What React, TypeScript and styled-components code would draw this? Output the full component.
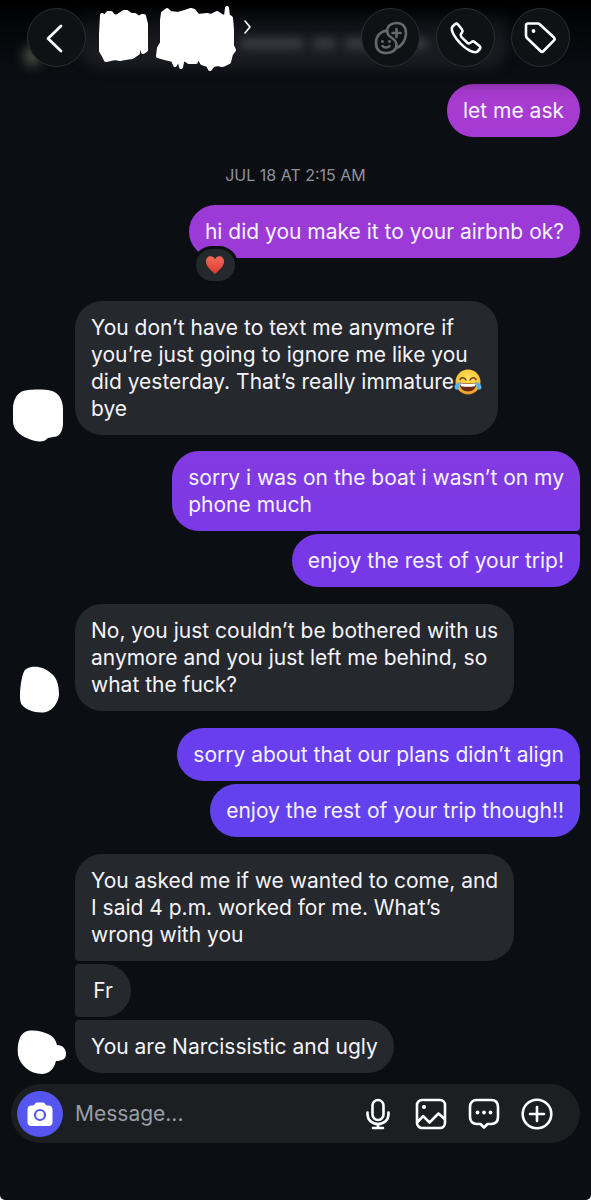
import React from 'react';
import styled, { createGlobalStyle } from 'styled-components';

const GlobalStyle = createGlobalStyle`
  *, *::before, *::after { box-sizing: border-box; }
  body {
    margin: 0;
    background: #ffffff;
    font-family: Inter, 'Liberation Sans', sans-serif;
  }
  button { font: inherit; color: inherit; cursor: pointer; }
`;

const Screen = styled.div`
  display: flex;
  flex-direction: column;
  min-height: 100vh;
  background: #0b0f13;
  border-radius: 0 0 5px 5px;
`;

const Header = styled.header`
  position: sticky;
  top: 0;
  z-index: 2;
  display: flex;
  align-items: flex-start;
  height: 84px;
  padding: 8px 21px 0 27px;
  overflow: hidden;
  background: linear-gradient(#000000, #04060a 30px, #0a0d12 70px, #0b0f13);
`;

const Backdrop = styled.div`
  position: absolute;
  inset: 0 82px 16px 78px;
  border-radius: 24px;
  background: linear-gradient(rgba(34, 35, 41, 0) 8px, rgba(34, 35, 41, 0.6) 32px, rgba(34, 35, 41, 0.75));
  filter: blur(6px);
`;

const Smear = styled.span<{ $left: number; $width: number }>`
  position: absolute;
  top: 38px;
  left: ${(p) => p.$left}px;
  width: ${(p) => p.$width}px;
  height: 11px;
  border-radius: 4px;
  background: rgba(150, 150, 158, 0.28);
  filter: blur(5px);
`;

const Glow = styled.span`
  position: absolute;
  top: 46px;
  left: 24px;
  width: 16px;
  height: 20px;
  border-radius: 8px;
  background: #4a5248;
  filter: blur(6px);
`;

const RoundButton = styled.button<{ $dim?: boolean }>`
  position: relative;
  display: grid;
  place-items: center;
  flex: none;
  width: 59px;
  height: 59px;
  padding: 0;
  border: 1px solid #2c2f32;
  border-radius: 50%;
  background: #0f1214;
  color: ${(p) => (p.$dim ? '#66686a' : '#ffffff')};
`;

const Profile = styled.button`
  position: relative;
  display: flex;
  flex: 1;
  padding: 0;
  margin-left: 10px;
  border: 0;
  background: none;
  svg { overflow: visible; }
`;

const Actions = styled.div`
  display: flex;
  gap: 16px;
`;

const Thread = styled.main`
  display: flex;
  flex-direction: column;
  padding: 0 11px 11px;
`;

const DateLabel = styled.time`
  align-self: center;
  margin: 28px 0 20px;
  font-size: 16px;
  line-height: 20px;
  color: #8f929c;
`;

const Group = styled.section<{ $gap: number; $sent?: boolean }>`
  display: flex;
  align-items: flex-end;
  justify-content: ${(p) => (p.$sent ? 'flex-end' : 'flex-start')};
  margin-bottom: ${(p) => p.$gap}px;
`;

const AvatarSlot = styled.div`
  flex: none;
  width: 64px;
  height: 54px;
  margin-bottom: -8px;
`;

const Stack = styled.div<{ $sent?: boolean }>`
  display: flex;
  flex-direction: column;
  align-items: ${(p) => (p.$sent ? 'flex-end' : 'flex-start')};
  gap: 3px;
`;

const Bubble = styled.div<{ $color: string; $corners?: string; $short?: boolean }>`
  position: relative;
  min-width: 56px;
  padding: 13px 16px;
  border-radius: ${(p) => p.$corners || '27px'};
  background: ${(p) => p.$color};
  color: #f5f3fa;
  font-size: 21px;
  line-height: 27px;
  text-align: ${(p) => (p.$short ? 'center' : 'left')};
  white-space: pre-line;
`;

const Reaction = styled.span`
  position: absolute;
  left: 4px;
  bottom: -26px;
  display: grid;
  place-items: center;
  width: 45px;
  height: 38px;
  border: 3px solid #0b0f13;
  border-radius: 19px;
  background: #25282c;
`;

const Emoji = styled.svg`
  vertical-align: -6px;
`;

const Composer = styled.form`
  display: flex;
  align-items: center;
  height: 59px;
  margin: 0 11px;
  padding: 0 27px 0 6px;
  border-radius: 30px;
  background: #1c1f21;
`;

const CameraButton = styled.button`
  display: grid;
  place-items: center;
  flex: none;
  width: 46px;
  height: 46px;
  padding: 0;
  border: 0;
  border-radius: 50%;
  background: #5555f0;
`;

const MessageInput = styled.input`
  flex: 1;
  min-width: 0;
  margin-left: 12px;
  padding: 0;
  border: 0;
  outline: 0;
  background: none;
  color: #f5f3fa;
  font-family: inherit;
  font-size: 21px;
  line-height: 27px;
  &::placeholder { color: #9a9da8; opacity: 1; }
`;

const Tools = styled.div`
  display: flex;
  gap: 21px;
`;

const ToolButton = styled.button`
  display: grid;
  place-items: center;
  width: 32px;
  height: 32px;
  padding: 0;
  border: 0;
  background: none;
  color: #ffffff;
`;

const line = {
  fill: 'none',
  stroke: 'currentColor',
  strokeWidth: 2.6,
  strokeLinecap: 'round' as const,
  strokeLinejoin: 'round' as const,
};

const GREY = '#25282c';

const Heart = () => (
  <svg width="20" height="20" viewBox="0 0 20 20" role="img" aria-label="heart">
    <defs>
      <linearGradient id="heart" x1="0" y1="0" x2="0" y2="1">
        <stop offset="0" stopColor="#f5695a" />
        <stop offset="1" stopColor="#d93a2a" />
      </linearGradient>
    </defs>
    <path fill="url(#heart)" d="M10 19C6 15.5 1 11.500 1 6.500C1 3.300 3 1.300 5.600 1.300C7.600 1.300 9.200 2.500 10 4.300C10.800 2.500 12.400 1.300 14.400 1.300C17 1.300 19 3.300 19 6.500C19 11.500 14 15.500 10 19Z" />
  </svg>
);

const Joy = () => (
  <Emoji width="28" height="26" viewBox="0 0 28 26" role="img" aria-label="tears of joy">
    <defs>
      <radialGradient id="joy" cx="0.5" cy="0.35" r="0.65">
        <stop offset="0" stopColor="#ffe45c" />
        <stop offset="0.7" stopColor="#fbc53a" />
        <stop offset="1" stopColor="#e9952a" />
      </radialGradient>
    </defs>
    <circle cx="14" cy="13" r="12.500" fill="url(#joy)" />
    <path d="M6 10.500C7.500 8 10.500 8 12 11M16 11C17.500 8 20.500 8 22 10.500" fill="none" stroke="#6b3c12" strokeWidth="1.500" strokeLinecap="round" />
    <path d="M5.500 13.500C10 14.800 18 14.800 22.500 13.500C22.500 19.500 19 22.500 14 22.500C9 22.500 5.500 19.500 5.500 13.500Z" fill="#6b2c12" />
    <path d="M6.200 14.200C10 15.300 18 15.300 21.800 14.200C21.700 16 21.300 16.800 20.800 17.200C16 18 12 18 7.200 17.200C6.700 16.800 6.300 16 6.200 14.200Z" fill="#ffffff" />
    <path d="M5.500 13C3 14 0.500 15.500 0.500 18C0.500 20 2 21 3.500 20.500C5.800 19.700 5.800 16 5.500 13ZM22.500 13C25 14 27.500 15.500 27.500 18C27.500 20 26 21 24.500 20.500C22.200 19.700 22.200 16 22.500 13Z" fill="#52b5ee" />
  </Emoji>
);

const blobs = {
  square: 'M10 3C16 0 33 0 41 2C48 4 52 11 52 20V36C51 44 48 48 42 48L37 49C33 54 25 53 18 50C8 46 2 40 2 32V20C2 12 5 6 10 3Z',
  oval: 'M17 3C24 0 34 2 41 9C47 14 48 23 48 30C47 38 42 45 35 47C26 49 15 45 11 40C7 35 10 15 12 9C13 6 14 4 17 3Z',
  nub: 'M14 5C20 2 32 4 39 8C43 10 45 14 46 18C52 18 55 22 55 27C55 32 51 34 45 34C43 42 38 47 31 47C19 47 9 38 7 28C6 18 8 8 14 5Z',
};

const Avatar = ({ shape }: { shape: keyof typeof blobs }) => (
  <AvatarSlot>
    <svg width="64" height="54" viewBox="0 0 64 54" aria-hidden="true">
      <path d={blobs[shape]} fill="#ffffff" />
    </svg>
  </AvatarSlot>
);

export default function App() {
  return (
    <>
      <GlobalStyle />
      <Screen>
        <Header>
          <Backdrop />
          <Smear $left={240} $width={64} />
          <Smear $left={312} $width={24} />
          <Smear $left={344} $width={84} />
          <Glow />
          <RoundButton aria-label="Back">
            <svg width="32" height="32" viewBox="0 0 32 32" {...line} strokeWidth={2.8}>
              <path d="M20 4L7 16.500L20 29" />
            </svg>
          </RoundButton>
          <Profile aria-label="Open profile">
            <svg width="160" height="66" viewBox="96 8 160 66">
              <g fill="#fff" stroke="#fff" strokeWidth="4" strokeLinejoin="round" strokeLinecap="round">
                <path d="M102 15L105 17L108 13L111 13L114 17L118 16L124 12L127 12L131 15L135 15L139 18L142 16L144 16L146 24V50L143 52L142 44L140 40L138 53L132 57L125 58L120 59L115 58L106 60L104 56L101 51L101 34Z" />
                <path d="M163 13L167 10L170 13L178 14L185 12L191 10L194 11L198 16L207 15L211 16L217 13L223 17L226 16L227 8L228 16L231 18L232 30L232 46L234 50L231 54L229 62L225 64L222 65L218 64L213 65L210 69L208 65L202 63L198 55L196 62L189 62L183 58L181 67L179 58L175 65L173 60L165 58L158 56L159 48L162 43L162 20Z" />
              </g>
              <path d="M245 21L250 27L245 33" {...line} stroke="#fff" strokeWidth={1.600} />
            </svg>
          </Profile>
          <Actions>
            <RoundButton $dim aria-label="Add sticker reaction">
              <svg width="34" height="34" viewBox="0 0 34 34" {...line} strokeWidth={2.600}>
                <path d="M13 11C13 5 17 2 22.500 2C28.500 2 32 6 32 12C32 19 28 25.500 22 27" />
                <path d="M13 9.500C13 18 22.500 16 22.500 24C22.500 29 18 32 12.500 32C6 32 2 28.500 2 22C2 15 6.500 10.500 13 9.500Z" />
                <path d="M22.500 8V16M18.500 12H26.500M8.500 25C10 27 14 27 15.500 25" />
                <path d="M8.500 20.500V20.700M15.500 20.500V20.700" strokeWidth={2.800} />
              </svg>
            </RoundButton>
            <RoundButton aria-label="Call">
              <svg width="34" height="34" viewBox="0 0 34 34" {...line}>
                <path d="M3.500 5.500L6 3.200C7 2.400 8.200 2.500 9 3.500L13 8.500C13.800 9.500 13.700 10.500 13 11.500L12 13C11.400 14 11.600 15 12.300 15.800L18.200 21.700C19 22.400 20 22.600 21 22L22.500 21C23.500 20.300 24.500 20.200 25.500 21L30.500 25C31.500 25.800 31.600 27 30.800 28L28.500 30.500C25 33 16.500 28 11.500 22.500C6 17 1 9 3.500 5.500Z" />
              </svg>
            </RoundButton>
            <RoundButton aria-label="Label">
              <svg width="34" height="34" viewBox="0 0 34 34" {...line}>
                <path d="M4 2.500H13.500C14.500 2.500 15.300 2.800 16 3.500L30 16.500C30.900 17.500 30.900 18.300 30 19.300L19.500 30C18.500 31 17.500 31 16.500 30L3 17C2.300 16.300 2 15.500 2 14.500V4.500C2 3.200 2.700 2.500 4 2.500Z" />
                <circle cx="9.500" cy="10" r="1.900" fill="currentColor" stroke="none" />
              </svg>
            </RoundButton>
          </Actions>
        </Header>

        <Thread>
          <Group $sent $gap={0}>
            <Bubble $color="linear-gradient(#8a30aa, #a037c6 6px, #a83bd0 16px, #a53bd3)">let me ask</Bubble>
          </Group>
          <DateLabel>JUL 18 AT 2:15 AM</DateLabel>
          <Group $sent $gap={43}>
            <Bubble $color="#9b3ad6">
              hi did you make it to your airbnb ok?
              <Reaction><Heart /></Reaction>
            </Bubble>
          </Group>
          <Group $gap={16}>
            <Avatar shape="square" />
            <Bubble $color={GREY}>
              {'You don’t have to text me anymore if\nyou’re just going to ignore me like you\ndid yesterday. That’s really immature'}
              <Joy />
              {'\nbye'}
            </Bubble>
          </Group>
          <Group $sent $gap={17}>
            <Stack $sent>
              <Bubble $color="linear-gradient(#833ae2, #7b39e6)" $corners="27px 27px 4px 27px">
                {'sorry i was on the boat i wasn’t on my\nphone much'}
              </Bubble>
              <Bubble $color="#7739e8" $corners="27px 4px 27px 27px">enjoy the rest of your trip!</Bubble>
            </Stack>
          </Group>
          <Group $gap={17}>
            <Avatar shape="oval" />
            <Bubble $color={GREY}>
              {'No, you just couldn’t be bothered with us\nanymore and you just left me behind, so\nwhat the fuck?'}
            </Bubble>
          </Group>
          <Group $sent $gap={17}>
            <Stack $sent>
              <Bubble $color="#683eee" $corners="27px 27px 4px 27px">sorry about that our plans didn’t align</Bubble>
              <Bubble $color="#6441ef" $corners="27px 4px 27px 27px">enjoy the rest of your trip though!!</Bubble>
            </Stack>
          </Group>
          <Group $gap={0}>
            <Avatar shape="nub" />
            <Stack>
              <Bubble $color={GREY} $corners="27px 27px 27px 4px">
                {'You asked me if we wanted to come, and\nI said 4 p.m. worked for me. What’s\nwrong with you'}
              </Bubble>
              <Bubble $color={GREY} $corners="4px 27px 27px 4px" $short>Fr</Bubble>
              <Bubble $color={GREY} $corners="4px 27px 27px 27px">You are Narcissistic and ugly</Bubble>
            </Stack>
          </Group>
        </Thread>

        <Composer onSubmit={(e) => e.preventDefault()}>
          <CameraButton type="button" aria-label="Camera">
            <svg width="26" height="26" viewBox="0 0 26 26">
              <path fill="#fff" d="M4.500 4.500H6C7.500 4.500 8 1.500 10 1.500H16C18 1.500 18.500 4.500 20 4.500H21.500C24 4.500 25.500 6 25.500 8.500V21C25.500 23.500 24 25 21.500 25H4.500C2 25 0.500 23.500 0.500 21V8.500C0.500 6 2 4.500 4.500 4.500Z" />
              <circle cx="13" cy="14" r="5" fill="#fff" stroke="#5555f0" strokeWidth="2.200" />
            </svg>
          </CameraButton>
          <MessageInput aria-label="Message" placeholder="Message..." />
          <Tools>
            <ToolButton type="button" aria-label="Record voice">
              <svg width="32" height="32" viewBox="0 0 32 32" {...line}>
                <rect x="10.500" y="2" width="11" height="20" rx="5.500" />
                <path d="M5.500 14.500V16C5.500 22 10 26 16 26S26.500 22 26.500 16V14.500M16 26V30M11 30H21" />
              </svg>
            </ToolButton>
            <ToolButton type="button" aria-label="Photos">
              <svg width="32" height="32" viewBox="0 0 32 32" {...line}>
                <rect x="2" y="2" width="28" height="28" rx="5" />
                <path d="M2.500 24L8.200 18.200L14.500 24.500L23.500 15.500L29.500 21" />
                <circle cx="9" cy="9" r="2.100" fill="currentColor" stroke="none" />
              </svg>
            </ToolButton>
            <ToolButton type="button" aria-label="Quick replies">
              <svg width="32" height="32" viewBox="0 0 32 32" {...line}>
                <path d="M9 2H23C27.500 2 30 4.500 30 9V19C30 23.500 27.500 26 23 26H19.500L16 29.500L12.500 26H9C4.500 26 2 23.500 2 19V9C2 4.500 4.500 2 9 2Z" />
                <g fill="currentColor" stroke="none">
                  <circle cx="9.500" cy="14.500" r="1.900" />
                  <circle cx="16" cy="14.500" r="1.900" />
                  <circle cx="22.500" cy="14.500" r="1.900" />
                </g>
              </svg>
            </ToolButton>
            <ToolButton type="button" aria-label="More">
              <svg width="32" height="32" viewBox="0 0 32 32" {...line}>
                <circle cx="16" cy="16" r="14.300" />
                <path d="M16 9V23M9 16H23" />
              </svg>
            </ToolButton>
          </Tools>
        </Composer>
      </Screen>
    </>
  );
}
